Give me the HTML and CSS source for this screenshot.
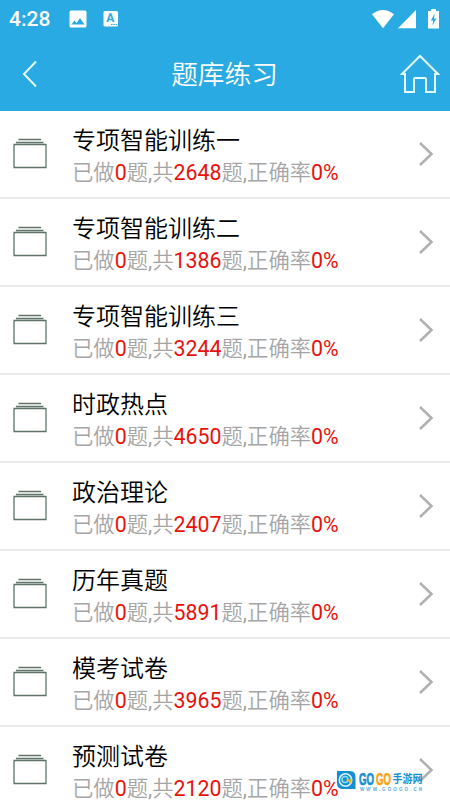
FILE: index.html
```html
<!DOCTYPE html>
<html lang="zh-CN">
<head>
  <meta charset="UTF-8">
  <meta name="viewport" content="width=device-width, initial-scale=1.0">
  <title>题库练习</title>
  <link rel="stylesheet" href="styles.css">
</head>
<body>
  <header>
    <div class="status-bar">
      <span class="time">4:28</span>
      <svg class="picture" width="18" height="18" viewBox="0 0 18 18">
        <rect x="0.5" y="0.5" width="17" height="17" rx="1.5" fill="#fff"/>
        <path d="M2.500 14.500l3-4 2 2.500 3.500-5 4.500 6.500z" fill="#29aae2"/>
      </svg>
      <svg class="letter" width="16" height="18" viewBox="0 0 16 18">
        <rect x="0.5" y="1" width="14.5" height="15.5" rx="1.5" fill="#fff"/>
        <text x="7.4" y="12" text-anchor="middle">A</text>
        <path d="M8 14.5h1.5M10.3 14.5h1.5M12.6 14.5h1.5" stroke="#29aae2"/>
      </svg>
      <svg class="signals" width="70" height="22" viewBox="0 0 70 22">
        <path d="M1 5.2Q12 -3.4 23 5.2L12 19.3z" fill="#fff"/>
        <path d="M27 19.3L45 1v18.3z" fill="#fff"/>
        <path d="M57 2h3V0h5v2h3v17.5H57z" fill="#fff"/>
        <path d="M63.8 4.5l-4 7h2.4l-.8 5 4-7h-2.5z" fill="#29aae2"/>
      </svg>
    </div>
    <div class="title-bar">
      <svg class="back" width="16" height="28" viewBox="0 0 16 28">
        <path d="M14 1.5L2 14l12 12.5"/>
      </svg>
      <h1>题库练习</h1>
      <svg class="home" width="40" height="40" viewBox="0 0 40 40">
        <path d="M5 20L2 20L20 2L38 20L35 20V38H26V25Q26 24 25 24H15Q14 24 14 25V38H5z"/>
      </svg>
    </div>
  </header>

  <ul class="list" id="list"></ul>

  <svg class="watermark" width="88" height="22" viewBox="0 0 88 22">
    <path d="M1 1h13q5.500 0 5.500 6v12H7q-6 0-6-6z" fill="#168fd0"/>
    <circle cx="9.500" cy="10" r="6.200" fill="none" stroke="#d9f3fc" stroke-width="1.600"/>
    <circle cx="9" cy="9.500" r="3" fill="none" stroke="#8edcf5" stroke-width="1.500"/>
    <path d="M9 9.500h7q0 4-3 5v-3z" fill="#f7b52b"/>
    <text class="brand" x="23" y="14.500" textLength="15" lengthAdjust="spacingAndGlyphs">GO</text>
    <text class="brand orange" x="40" y="14.500" textLength="15" lengthAdjust="spacingAndGlyphs">GO</text>
    <text class="brand-cn" x="56.500" y="13" textLength="30" lengthAdjust="spacingAndGlyphs">手游网</text>
    <text class="brand-url" x="24" y="20.500" textLength="62">WWW.GOOGO.CN</text>
  </svg>

  <script>
    const items = [
      ['专项智能训练一', 2648],
      ['专项智能训练二', 1386],
      ['专项智能训练三', 3244],
      ['时政热点', 4650],
      ['政治理论', 2407],
      ['历年真题', 5891],
      ['模考试卷', 3965],
      ['预测试卷', 2120]
    ];

    document.getElementById('list').innerHTML = items.map(([name, total]) => `
      <li class="item">
        <svg class="folder" width="34" height="32" viewBox="0 0 34 32">
          <path d="M5.500 1.500H28M3 4.500H30.500M1 6.500H33V29.500H1z"/>
        </svg>
        <div class="info">
          <div class="name">${name}</div>
          <div class="stats">已做<em>0</em>题<i>,</i>共<em>${total}</em>题<i>,</i>正确率<em>0%</em></div>
        </div>
        <svg class="arrow" width="16" height="26" viewBox="0 0 16 26">
          <path d="M2 2l11.500 11L2 24"/>
        </svg>
      </li>`).join('');
  </script>
</body>
</html>
```

FILE: styles.css
```css
* {
  box-sizing: border-box;
}

body {
  margin: 0;
  height: 800px;
  overflow: hidden;
  position: relative;
  background: #fff;
  font-family: Roboto, "Noto Sans CJK SC", sans-serif;
  font-weight: 350;
}

header {
  height: 111px;
  background: #29aae2;
  color: #fff;
}

.status-bar {
  display: flex;
  align-items: center;
  height: 37px;
  padding: 0 9px;
}

.time {
  width: 60px;
  font-size: 21px;
  font-weight: 500;
}

.picture {
  margin-right: 16px;
}

.letter text {
  font-size: 12px;
  font-weight: 700;
  fill: #29aae2;
}

.signals {
  margin-left: auto;
  margin-top: 2px;
}

.title-bar {
  display: flex;
  align-items: center;
  justify-content: space-between;
  height: 74px;
  padding: 0 10px 0 22px;
}

.title-bar h1 {
  margin: 0 0 3px 11px;
  font-size: 26.7px;
  font-weight: 350;
}

.back,
.home {
  fill: none;
  stroke: #e2fbff;
  stroke-width: 2;
}

.list {
  margin: 0;
  padding: 0;
  list-style: none;
}

.item {
  display: flex;
  align-items: center;
  height: 88px;
  padding: 0 16px 0 13px;
  border-bottom: 2px solid #ebebeb;
}

.folder {
  fill: none;
  stroke: #5f7468;
  stroke-width: 1.3;
}

.info {
  flex: 1;
  padding: 5px 0 0 25px;
}

.name {
  font-size: 24px;
  line-height: 32px;
  color: #000;
}

.stats {
  font-size: 21.33px;
  line-height: 31px;
  color: #a5a5a5;
  white-space: nowrap;
}

.stats em,
.stats i {
  font-style: normal;
  font-weight: 400;
}

.stats em {
  color: #e8120c;
}

.arrow {
  fill: none;
  stroke: #b0b0b0;
  stroke-width: 2.5;
}

/* site mark over the last row */
.watermark {
  position: absolute;
  left: 336px;
  top: 770px;
}

.brand {
  font: 700 16px "Liberation Sans", sans-serif;
  fill: #168fd0;
  stroke: #168fd0;
  stroke-width: 0.7px;
}

.brand.orange {
  fill: #f9a51a;
  stroke: #f9a51a;
}

.brand-cn {
  font: 700 11px "Noto Sans CJK SC", sans-serif;
  fill: #168fd0;
}

.brand-url {
  font: 700 4.5px "Liberation Sans", sans-serif;
  fill: #55aeda;
}
```
